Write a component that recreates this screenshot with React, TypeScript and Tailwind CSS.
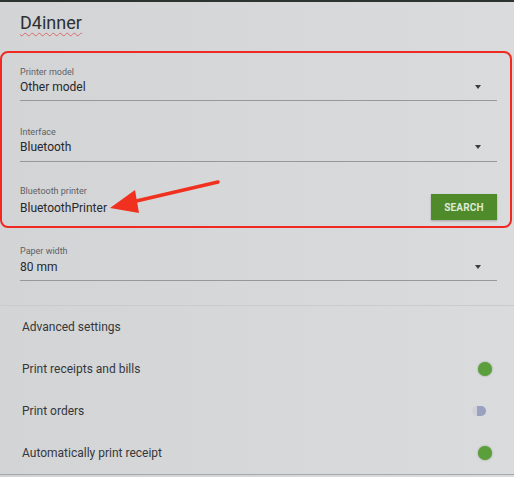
import React from "react";

function Caret() {
  return (
    <span className="mr-[16px] h-0 w-0 border-l-[3.5px] border-r-[3.5px] border-t-[4px] border-l-transparent border-r-transparent border-t-[#3a3c3f]" />
  );
}

function Field({ label, value, cls }: { label: string; value: string; cls: string }) {
  return (
    <div className={"flex flex-col border-b border-[#96989a] " + cls}>
      <div className="h-[12px] text-[9px] leading-[12px] text-[#5e6165]">{label}</div>
      <div className="mt-[1px] flex h-[16px] items-center justify-between">
        <span className="text-[12px] leading-[16px] text-[#26282b]">{value}</span>
        <Caret />
      </div>
    </div>
  );
}

function Toggle({ on }: { on: boolean }) {
  if (on) {
    return (
      <div className="relative h-[14px] w-[24px]">
        <div className="absolute right-0 top-0 h-[14px] w-[14px] rounded-full bg-[#5b9f3c] shadow-[0_0_2px_rgba(60,110,40,0.6)]" />
      </div>
    );
  }
  return (
    <div className="relative h-[14px] w-[24px]">
      <div className="absolute right-[6px] top-[2px] h-[10px] w-[14px] rounded-full bg-[#d0d2d8]" />
      <div className="absolute right-[6px] top-[2px] h-[10px] w-[9px] rounded-l-[2px] rounded-r-full bg-[#98a1bf]" />
    </div>
  );
}

function Row({ text, toggle }: { text: string; toggle?: boolean }) {
  return (
    <div className="flex h-[42px] items-center justify-between pl-[22px] pr-[22px]">
      <span className="text-[12px] leading-[16px] text-[#34373b]">{text}</span>
      {toggle !== undefined && <Toggle on={toggle} />}
    </div>
  );
}

export default function App() {
  return (
    <div className="relative h-[477px] w-[514px] overflow-hidden bg-gradient-to-r from-[#d3d4d6] to-[#dadbdd] font-['Roboto',sans-serif]">
      <div className="h-[2px] bg-[#2c3430]" />
      <div className="h-[49px] pl-[20px] pt-[9px]">
        <span className="text-[18px] leading-[24px] text-[#2d3033] underline decoration-[#d66a6a] decoration-wavy decoration-[1px] underline-offset-[3px]">
          D4inner
        </span>
      </div>

      <div className="flex w-[512px] flex-col rounded-[8px] border-2 border-[#f02a22] pb-[6px] pl-[18px] pr-[13px] pt-[13px]">
        <Field label="Printer model" value="Other model" cls="pb-[5px]" />
        <Field label="Interface" value="Bluetooth" cls="mt-[25px] pb-[6px]" />
        <div className="mt-[23px] flex items-start justify-between">
          <div className="flex flex-col">
            <div className="h-[12px] text-[9px] leading-[12px] text-[#5e6165]">Bluetooth printer</div>
            <div className="mt-[3px] h-[16px] text-[12px] leading-[16px] text-[#26282b]">BluetoothPrinter</div>
          </div>
          <button className="mt-[9px] flex h-[26px] w-[66px] items-center justify-center bg-[#4f8b2b] text-[10px] font-bold tracking-[0.2px] text-[#dfead6] shadow-[0_1px_2px_rgba(0,0,0,0.25)]">
            SEARCH
          </button>
        </div>
      </div>

      <div className="pl-[20px] pr-[17px] pt-[17px]">
        <div className="flex flex-col border-b border-[#96989a] pb-[5px]">
          <div className="h-[12px] text-[9px] leading-[12px] text-[#5e6165]">Paper width</div>
          <div className="mt-[2px] flex h-[16px] items-center justify-between">
            <span className="text-[12px] leading-[16px] text-[#26282b]">80 mm</span>
            <Caret />
          </div>
        </div>
      </div>

      <div className="mt-[24px] h-[1px] bg-[#cacbcd]" />

      <Row text="Advanced settings" />
      <Row text="Print receipts and bills" toggle={true} />
      <Row text="Print orders" toggle={false} />
      <Row text="Automatically print receipt" toggle={true} />
      <div className="h-[1px] bg-[#a7a8aa]" />

      <svg className="absolute left-0 top-0" width="514" height="477" viewBox="0 0 514 477">
        <line x1="218" y1="182" x2="132" y2="202" stroke="#f1311f" strokeWidth="3.5" strokeLinecap="round" />
        <polygon points="110,208 135,190 139,213" fill="#f1311f" />
      </svg>
    </div>
  );
}
